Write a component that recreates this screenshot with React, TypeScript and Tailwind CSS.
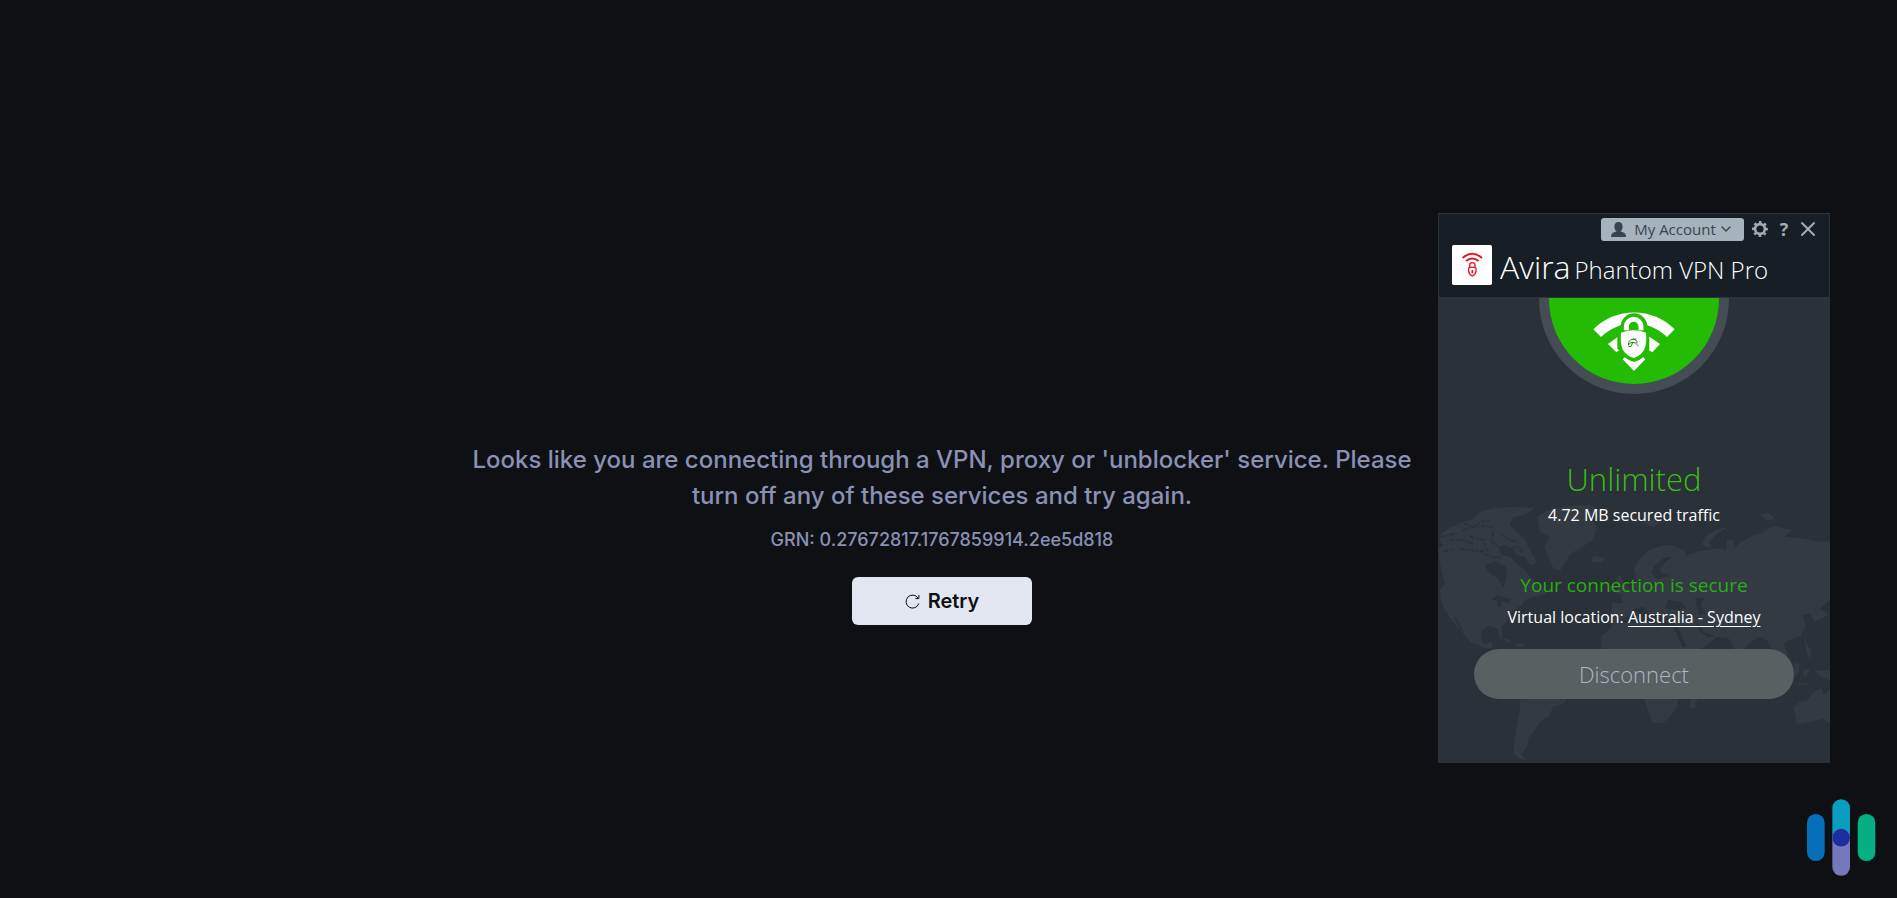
import { ChevronDown, X } from 'lucide-react'

function WorldMap() {
  return (
    <svg
      className="absolute bottom-0 left-0 w-full"
      viewBox="24 180 1176 789"
      fill="#343a42"
      aria-hidden="true"
    >
      {/* North America */}
      <path d="M27 325 40 315 27 300 30 285 60 262 100 245 130 238 150 215 200 203 255 200 312 205 290 222 250 232 240 252 262 280 285 300 300 330 322 368 300 375 285 350 262 345 250 330 225 315 205 322 215 345 240 350 262 372 285 390 300 412 322 432 345 450 322 468 290 478 272 498 250 510 235 530 230 545 213 562 218 588 210 595 203 565 175 558 155 572 152 600 165 612 185 605 188 625 165 625 120 605 95 575 62 535 45 510 32 480 30 450 45 430 35 395 27 350Z" />
      <path d="M215 595 235 598 250 608 230 605ZM258 610 282 612 280 622 258 618ZM318 450 345 440 350 462 325 465Z" />
      {/* South America */}
      <path d="M272 770H410L405 788 370 800 355 830 325 850 315 870 295 895 290 925 272 942 290 962 265 955 250 935 258 870 268 820ZM315 940 325 942 318 946Z" />
      {/* Greenland, Iceland and the islands of the north */}
      <path d="M330 275 322 230 350 212 380 205 430 196 480 196 502 206 480 235 500 258 490 300 450 325 420 342 405 370 390 392 370 385 355 350 342 320 360 292Z" />
      <path d="M482 355 500 348 525 355 515 367 490 367ZM640 248 670 238 690 245 672 262 655 258ZM990 225 1015 218 1035 235 1015 242Z" />
      <path d="M815 315 828 288 855 270 892 262 858 284 838 305 842 325Z" />
      <path d="M560 463 568 442 556 425 570 402 582 428 602 450 596 465ZM538 440 552 435 552 455 536 458Z" />
      {/* Europe, Asia and Africa */}
      <path d="M612 385 630 355 655 332 690 318 725 315 768 335 765 348 800 335 830 330 868 325 888 330 892 298 908 300 915 325 930 308 965 288 1000 276 1030 258 1085 270 1065 290 1110 294 1160 304 1200 305V480L1170 505 1195 525 1155 545 1140 520 1118 525 1128 560 1110 590 1080 600 1060 610 1075 645 1055 655 1020 620 1010 600 990 590 960 605 945 625 925 660 905 610 895 595 860 590 848 602 800 635H515L512 592 545 560 545 490 580 488 572 472 600 455 615 435 620 415Z" />
      <path d="M640 770H745L742 800 720 830 700 848 668 850 655 815ZM780 770 803 770 795 803 780 805Z" />
      {/* Australia and the Pacific */}
      <path d="M1090 800 1110 785 1130 783 1150 757 1175 745 1182 765 1200 745V852L1180 836 1140 845 1100 852Z" />
      <path d="M1120 585 1130 610 1145 635 1140 660 1130 635ZM1092 668 1110 672 1105 700 1092 712ZM1118 690 1140 688 1130 705 1122 712ZM1155 692 1200 690 1200 722 1165 705ZM1090 728 1150 730 1120 735Z" />
      {/* lakes and seas */}
      <g fill="#2a3138">
        <path d="M165 378 195 362 228 380 232 405 218 445 205 415 180 402Z" />
        <path d="M185 480 202 465 218 472 245 478 232 488 212 482 214 500 204 500 200 480Z" />
        <path d="M560 548 590 530 612 508 640 500 668 532 684 512 700 535 732 540 735 556 700 556 650 548Z" />
        <path d="M705 505 715 480 755 486 768 505 740 510ZM795 475 822 473 812 495 828 522 806 525 800 500Z" />
        <path d="M725 350 700 355 672 378 665 400 682 418 722 404 696 400 690 388 705 368ZM730 560 742 562 770 620 758 622ZM795 550 808 552 825 578 855 588 835 592 810 575Z" />
        <path d="M70 530 78 532 102 575 94 572Z" />
      </g>
      {/* arctic channels */}
      <path
        d="M30 290 52 286 80 280M96 272 120 262 170 258 190 264M100 250 130 262 150 245 180 243M40 335 70 328M90 326 120 330 150 335 180 328M120 290 160 300 165 320M190 275 185 305 205 320M60 300 100 300 130 312M215 285 240 300 262 306M240 325 265 320 280 340M160 340 190 352 215 350"
        fill="none"
        stroke="#2a3138"
        strokeWidth="5"
        strokeDasharray="14 5 7 4"
      />
    </svg>
  )
}

function AviraLogo() {
  return (
    <svg className="size-10 shrink-0" viewBox="0 0 120 120" fill="none" stroke="#e5142b" aria-hidden="true">
      <rect width="120" height="120" rx="5" fill="#fff" stroke="none" />
      <path d="M32 39Q60 14 90 39" strokeWidth="6" />
      <path d="M42 48Q60 33 80 48" strokeWidth="6" />
      <path d="M53 68V61a8 8 0 0 1 16 0V68" strokeWidth="4" />
      <path d="M50 69Q61 64 72 69V79Q71 88 61 93Q51 88 50 79Z" strokeWidth="4" />
      <path d="M61 75V85" strokeWidth="5" />
    </svg>
  )
}

function SecureBadge() {
  return (
    <svg className="h-24 w-[190px]" viewBox="57 24 570 288" aria-hidden="true">
      <circle cx="342" cy="27" r="285" fill="#434d53" />
      <circle cx="342" cy="27" r="255" fill="#24bb04" />
      {/* signal arcs */}
      <path d="M220 118A172 172 0 0 1 464 118L441 141A140 140 0 0 0 243 141Z" fill="#fff" />
      <path d="M264 162 292 142V178L298 180 289 187ZM420 162 388 140V178L386 180 397 187Z" fill="#fff" />
      <path d="M308 208 314 202Q328 214 342 216Q356 214 370 202L376 208 342 243Z" fill="#fff" />
      {/* padlock */}
      <path
        d="M302 128V110a40 40 0 0 1 80 0V128Q389 165 380 184Q368 206 342 212Q316 206 304 184Q295 165 302 128Z"
        fill="#24bb04"
      />
      <path d="M319 121V110a22 22 0 0 1 44 0V121" fill="none" stroke="#fff" strokeWidth="15" />
      <path d="M303 128Q342 114 378 128Q381 158 373 178Q364 197 341 204Q317 197 308 178Q300 158 303 128Z" fill="#fff" />
      <g fill="none" stroke="#2c8a1c" strokeWidth="3" strokeLinecap="round">
        <path d="M325 164Q325 154 332 149Q341 145 349 151Q352 154 351 159M325 164Q331 158 338 157Q345 155 355 167" />
        <path d="M338 157 334 168Q330 173 326 169M336 148 348 147" />
      </g>
    </svg>
  )
}

function GearIcon() {
  return (
    <svg className="size-4" viewBox="0 0 16 16" fill="none" stroke="#a5adb3" aria-hidden="true">
      <circle cx="8" cy="8" r="4.9" strokeWidth="2.6" />
      <circle cx="8" cy="8" r="6.9" strokeWidth="2" strokeDasharray="2.71 2.71" strokeDashoffset="1.35" />
    </svg>
  )
}

function VpnWindow() {
  return (
    <section className="absolute top-[213px] right-[67px] w-[392px] overflow-hidden bg-[#2a3138] font-['Open_Sans',sans-serif] text-white">
      <WorldMap />
      <header className="relative h-[85px] border border-[#2b353c] bg-[#171e25] px-[13px] pt-[3px]">
        <div className="flex items-center justify-end text-[#a5adb3]">
          <button className="mr-2 flex h-[23px] w-[143px] items-center justify-center rounded-[3px] bg-[#a6b3bd] text-[15px] text-[#3b444b]">
            <svg className="mr-2 size-[15px]" viewBox="0 0 15 15" fill="currentColor" aria-hidden="true">
              <path d="M7.5 0C10 0 11.6 1.8 11.6 4.4 11.6 6.6 10.8 8.4 9.5 9.3L13.5 11Q15 12 15 15H0Q0 12 1.5 11L5.5 9.3C4.2 8.4 3.4 6.6 3.4 4.4 3.4 1.8 5 0 7.5 0Z" />
            </svg>
            My Account
            <ChevronDown className="ml-0.5 size-4" strokeWidth={2} />
          </button>
          <button aria-label="Settings">
            <GearIcon />
          </button>
          <button className="w-8 text-center text-[18px] leading-5 font-bold" aria-label="Help">
            ?
          </button>
          <button aria-label="Close">
            <X className="-mx-1 size-6" strokeWidth={2} />
          </button>
        </div>
        <div className="mt-1 flex gap-2">
          <AviraLogo />
          <h2 className="flex items-baseline gap-1 text-[24px] leading-[44px] font-light whitespace-nowrap">
            <span className="text-[32px]">Avira</span>
            Phantom VPN Pro
          </h2>
        </div>
      </header>
      <div className="relative flex flex-col items-center pb-16">
        <SecureBadge />
        <p className="mt-[65px] text-[31px] leading-10 font-light text-[#3fbb15]">Unlimited</p>
        <p className="mt-1 text-[16px] leading-6">4.72 MB secured traffic</p>
        <p className="mt-11 text-[19px] leading-7 text-[#27ae15]">Your connection is secure</p>
        <p className="mt-1.5 text-[16px] leading-6">
          Virtual location:{' '}
          <a href="#" className="underline underline-offset-3">
            Australia - Sydney
          </a>
        </p>
        <button className="mt-5 h-[50px] w-[320px] rounded-full bg-[#596062] text-[22px] font-light text-[#a9b8c6]">
          Disconnect
        </button>
      </div>
    </section>
  )
}

function CornerLogo() {
  return (
    <svg className="absolute right-[21px] bottom-[21px] w-[70px]" viewBox="48 54 210 237" aria-hidden="true">
      <rect x="51" y="102" width="53" height="141" rx="26" fill="#066fb9" />
      <rect x="127" y="58" width="53" height="140" rx="26" fill="#0a9dbf" />
      <rect x="127" y="147" width="53" height="140" rx="26" fill="#7678bd" />
      <circle cx="153.5" cy="173" r="26.5" fill="#1b2f9f" />
      <rect x="203" y="102" width="53" height="141" rx="26" fill="#06ae83" />
    </svg>
  )
}

export default function App() {
  return (
    <div className="relative min-h-screen bg-[#0f1013] font-['Inter',sans-serif]">
      <main className="flex flex-col items-center pt-[442px] pr-[13px]">
        <h1 className="max-w-[960px] text-center text-[24px] leading-9 font-medium text-[#8a91b4]">
          Looks like you are connecting through a VPN, proxy or 'unblocker' service. Please turn off any of these
          services and try again.
        </h1>
        <p className="mt-3 text-[18px] leading-[27px] font-medium text-[#8a91b4]">GRN: 0.27672817.1767859914.2ee5d818</p>
        <button className="mt-6 flex h-12 w-[180px] items-center justify-center gap-2 rounded-md bg-[#e1e6f0] text-[20px] font-semibold text-[#0f1013]">
          <svg className="size-[15px]" viewBox="0 0 15 15" fill="none" stroke="currentColor" aria-hidden="true">
            <path d="M13.8 9.5A6.5 6.5 0 1 1 13 4" />
            <path d="M13.9 1V4.6H10.3" />
          </svg>
          Retry
        </button>
      </main>
      <VpnWindow />
      <CornerLogo />
    </div>
  )
}
